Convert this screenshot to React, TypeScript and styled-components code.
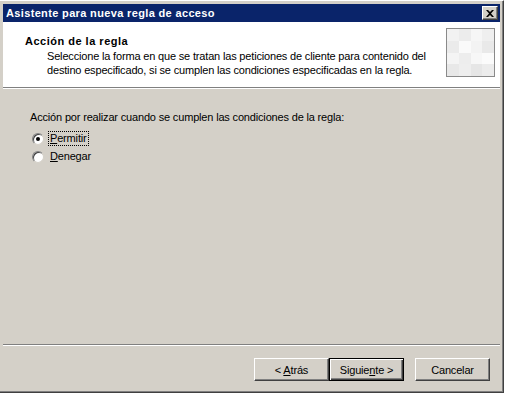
import styled, { createGlobalStyle, css } from 'styled-components'

const GlobalStyle = createGlobalStyle`
  html, body {
    margin: 0;
    padding: 0;
    background: #ffffff;
    font-family: Tahoma, "Liberation Sans", Arial, sans-serif;
    font-size: 11px;
    letter-spacing: -0.17px;
    color: #000;
  }
`

const bevel = css`
  border-style: solid;
  border-width: 1px;
  border-color: #ffffff #404040 #404040 #ffffff;
  box-shadow: inset -1px -1px 0 #808080, inset 1px 1px 0 #d4d0c8;
`

const Window = styled.div`
  ${bevel}
  box-sizing: border-box;
  width: 505px;
  height: 393px;
  margin-left: -1px;
  background: #d4d0c8;
  padding: 3px;
  display: flex;
  flex-direction: column;
`

const TitleBar = styled.div`
  height: 18px;
  flex: none;
  background: #0a246a;
  color: #fff;
  font-weight: bold;
  letter-spacing: 0.35px;
  display: flex;
  align-items: center;
  justify-content: space-between;
  padding: 0 2px 0 3px;
`

const CloseButton = styled.div`
  ${bevel}
  box-sizing: border-box;
  width: 16px;
  height: 14px;
  background: #d4d0c8;
  display: flex;
  align-items: center;
  justify-content: center;
`

const Header = styled.div`
  height: 65px;
  flex: none;
  background: #fff;
  display: flex;
  justify-content: space-between;
  padding: 0 5px 0 22px;
  border-bottom: 1px solid #808080;
  box-shadow: 0 1px 0 #ffffff;
`

const HeaderText = styled.div`
  padding-top: 13px;
`

const HeaderTitle = styled.div`
  font-weight: bold;
  letter-spacing: 0.5px;
  line-height: 13px;
`

const HeaderDesc = styled.div`
  padding-left: 22px;
  line-height: 14px;
  margin-top: 1px;
`

const IconBox = styled.div`
  margin-top: 6px;
  width: 49px;
  height: 49px;
  box-sizing: border-box;
  border: 1px solid #8a8a8a;
  display: grid;
  grid-template-columns: repeat(4, 1fr);
  grid-template-rows: repeat(4, 1fr);
`

const Cell = styled.div<{ $shade: string }>`
  background: ${(p) => p.$shade};
`

const Body = styled.div`
  flex: 1;
  margin-top: 1px;
  padding: 22px 0 0 27px;
`

const RadioGroup = styled.div`
  display: flex;
  flex-direction: column;
  gap: 5px;
  margin-top: 9px;
  padding-left: 2px;
`

const RadioRow = styled.label`
  display: flex;
  align-items: center;
  gap: 5px;
  height: 13px;
`

const RadioCircle = styled.span<{ $checked?: boolean }>`
  position: relative;
  width: 12px;
  height: 12px;
  box-sizing: border-box;
  border-radius: 50%;
  background: #fff;
  border: 1px solid;
  border-color: #808080 #d4d0c8 #d4d0c8 #808080;
  box-shadow: inset 1px 1px 0 #404040;

  &::after {
    content: '';
    display: ${(p) => (p.$checked ? 'block' : 'none')};
    position: absolute;
    left: 3px;
    top: 3px;
    width: 4px;
    height: 4px;
    border-radius: 50%;
    background: #000;
  }
`

const RadioLabel = styled.span<{ $focused?: boolean }>`
  padding: 0 1px;
  line-height: 13px;
  outline: ${(p) => (p.$focused ? '1px dotted #000' : 'none')};
`

const Footer = styled.div`
  height: 45px;
  flex: none;
  box-sizing: border-box;
  border-top: 1px solid #808080;
  box-shadow: inset 0 1px 0 #ffffff;
  display: flex;
  justify-content: flex-end;
  align-items: flex-start;
  padding: 13px 10px 0 0;
`

const Button = styled.button<{ $default?: boolean; $gap?: number }>`
  width: 75px;
  height: 23px;
  box-sizing: border-box;
  margin-left: ${(p) => p.$gap ?? 0}px;
  background: #d4d0c8;
  font-family: inherit;
  font-size: 11px;
  letter-spacing: inherit;
  color: #000;
  padding: 0;
  border-style: solid;
  border-width: 1px;
  border-color: #ffffff #404040 #404040 #ffffff;
  box-shadow: inset -1px -1px 0 #808080;
  ${(p) =>
    p.$default &&
    css`
      border-color: #000;
      box-shadow: inset 1px 1px 0 #ffffff, inset -1px -1px 0 #404040, inset -2px -2px 0 #808080;
    `}
`

const shades = [
  '#f2f2f2', '#ececec', '#f6f6f6', '#efefef',
  '#ebebeb', '#fafafa', '#f3f3f3', '#e9e9e9',
  '#f4f4f4', '#ededed', '#f7f7f7', '#fbfbfb',
  '#e8e8e8', '#eeeeee', '#e6e6e6', '#ececec',
]

export default function App() {
  return (
    <>
      <GlobalStyle />
      <Window>
        <TitleBar>
          <span>Asistente para nueva regla de acceso</span>
          <CloseButton>
            <svg width="8" height="7" viewBox="0 0 8 7">
              <path d="M0 0h2l2 2 2-2h2L5 3.5 8 7H6L4 5 2 7H0l3-3.5z" fill="#000" />
            </svg>
          </CloseButton>
        </TitleBar>
        <Header>
          <HeaderText>
            <HeaderTitle>Acción de la regla</HeaderTitle>
            <HeaderDesc>
              Seleccione la forma en que se tratan las peticiones de cliente para contenido del
              <br />
              destino especificado, si se cumplen las condiciones especificadas en la regla.
            </HeaderDesc>
          </HeaderText>
          <IconBox>
            {shades.map((s, i) => (
              <Cell key={i} $shade={s} />
            ))}
          </IconBox>
        </Header>
        <Body>
          <div>Acción por realizar cuando se cumplen las condiciones de la regla:</div>
          <RadioGroup>
            <RadioRow>
              <RadioCircle $checked />
              <RadioLabel $focused>
                <u>P</u>ermitir
              </RadioLabel>
            </RadioRow>
            <RadioRow>
              <RadioCircle />
              <RadioLabel>
                <u>D</u>enegar
              </RadioLabel>
            </RadioRow>
          </RadioGroup>
        </Body>
        <Footer>
          <Button>
            &lt; <u>A</u>trás
          </Button>
          <Button $default>
            Siguie<u>n</u>te &gt;
          </Button>
          <Button $gap={11}>Cancelar</Button>
        </Footer>
      </Window>
    </>
  )
}
